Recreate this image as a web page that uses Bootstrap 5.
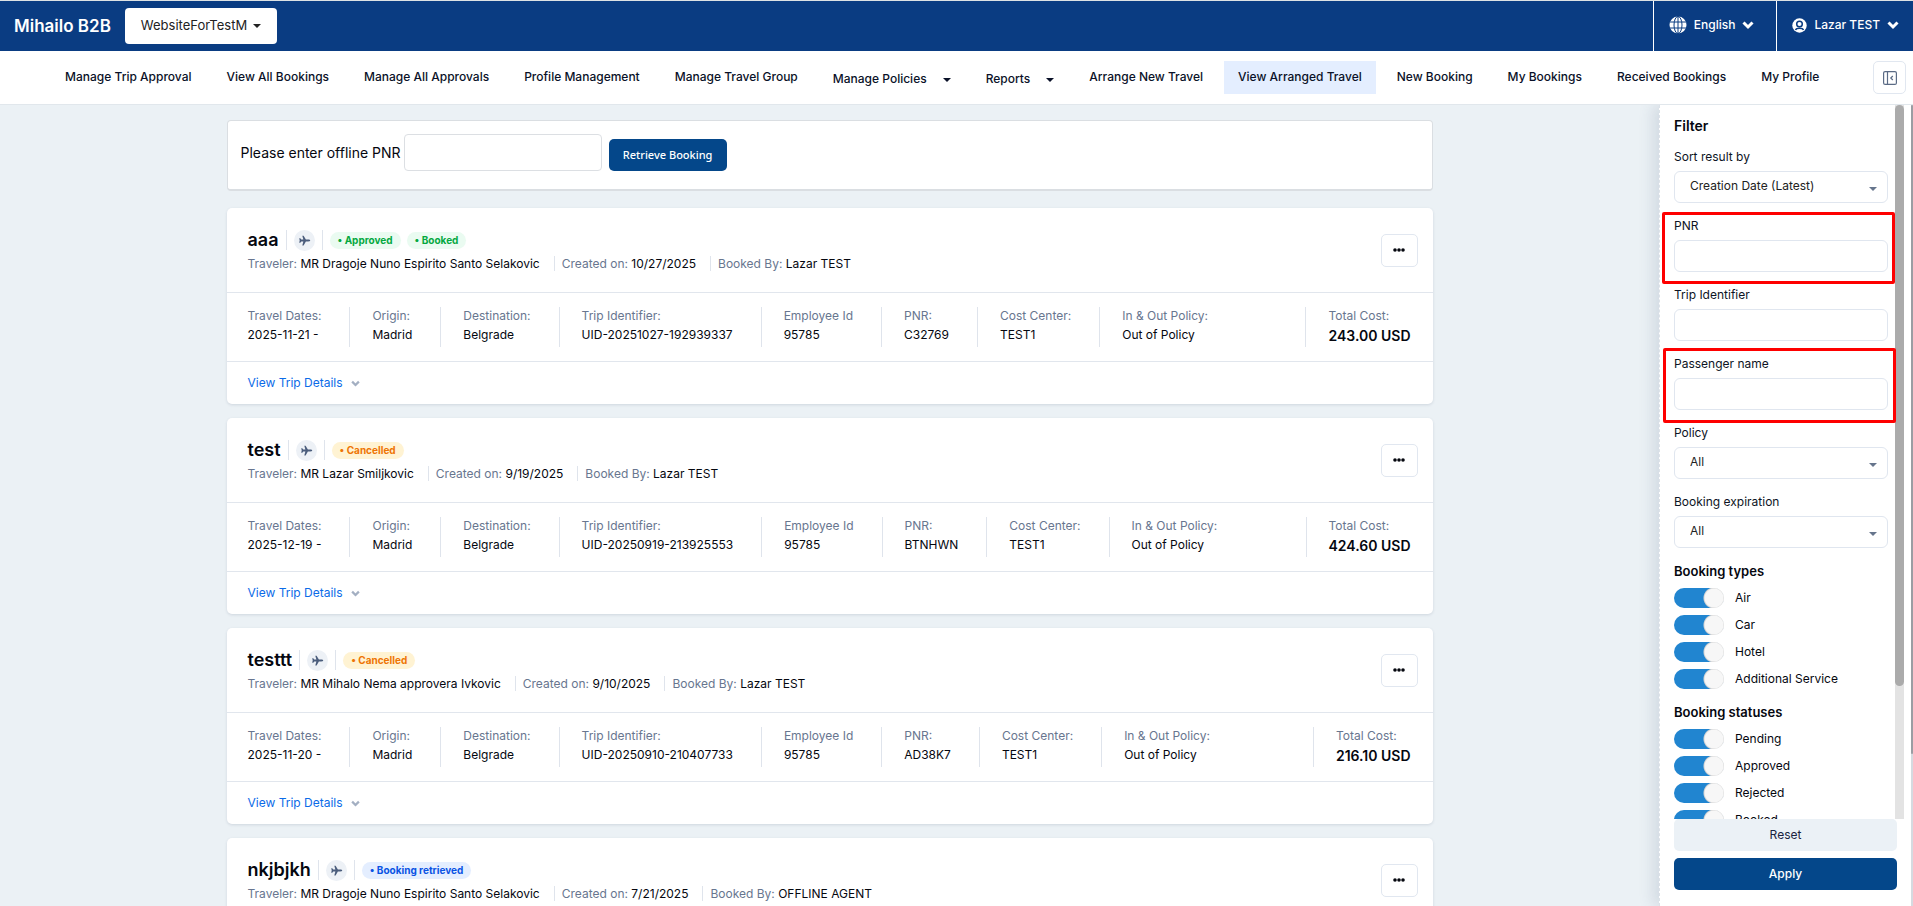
<!DOCTYPE html>
<html lang="en">
<head>
<meta charset="utf-8">
<meta name="viewport" content="width=device-width, initial-scale=1">
<title>Mihailo B2B - View Arranged Travel</title>
<link rel="stylesheet" href="https://cdn.jsdelivr.net/npm/bootstrap@5.3.0/dist/css/bootstrap.min.css">
<style>
  body { font-family: Inter, "Liberation Sans", sans-serif; font-size: 12px; line-height: 18px; color: #05070f; background: #ebf1f5; }
  a { text-decoration: none; }
  .topbar { background: #0a3c82; border-top: 1px solid #dde2e4; height: 51px; flex: none; color: #fff; }
  .brand-name { font-size: 17px; font-weight: 600; margin: 0 14px; }
  .site-btn { height: 36px; width: 152px; background: #fff; border: 0; border-radius: 4px; font-size: 13px; color: #222; padding: 0 0 2px; }
  .tri { width: 0; height: 0; border: 4px solid transparent; border-bottom: 0; border-top-color: currentColor; display: inline-block; }
  .site-btn .tri { margin-left: 2px; vertical-align: 2px; }
  .top-item { border: 0; border-left: 1px solid #fff; background: none; color: #fff; font-weight: 500; height: 50px; padding: 0 14px 2px 15px; }
  .top-item span { margin: 0 7px; }
  .top-item.lang { padding-right: 22px; }
  .menubar { background: #fff; border-bottom: 1px solid #e1e7ec; height: 54px; flex: none; padding: 0 7px 0 51px; }
  .menu-links { gap: 7px; }
  .menubar a { color: #0a1128; font-weight: 500; height: 33px; line-height: 31px; padding: 0 14px; white-space: nowrap; }
  .menubar a.current { background: #e4eeff; }
  .menubar a.dd { line-height: 35px; }
  .menubar .tri { margin-left: 16px; vertical-align: 1px; border-width: 4px 4px 0; }
  .square-btn { background: #fff; border: 1px solid #e1e7f0; border-radius: 5px; color: #05070f; padding: 0; }
  .menubar .square-btn { width: 33px; height: 33px; color: #5b6b85; }
  .results { max-width: 1206px; padding-top: 15px; }
  .search-box { background: #fff; border: 1px solid #dadee2; border-bottom-width: 2px; border-radius: 4px; height: 71px; padding: 0 13px 5px; font-size: 14px; margin-bottom: 17px; }
  .search-box input { width: 198px; height: 37px; border: 1px solid #dcdfe3; border-radius: 4px; margin: 0 7px 0 3px; }
  .blue-btn { background: #04478a; color: #fff; border: 0; border-radius: 5px; font-weight: 500; height: 32px; }
  .retrieve { width: 118px; font: 500 11px "Noto Sans", sans-serif; margin-top: 4px; }
  .trip { background: #fff; border-radius: 5px; box-shadow: 0 1px 3px rgba(40,60,90,.14); margin-bottom: 14px; }
  .trip-head { height: 85px; padding: 21px 15px 0 21px; border-bottom: 1px solid #e1e6ed; }
  .trip-head h2 { font-size: 18px; line-height: 22px; font-weight: 600; margin: 0; }
  .plane { width: 21px; height: 21px; border-radius: 50%; background: #edf1f6; color: #4b5d7c; }
  .bar { width: 1px; background: #dfe4ec; height: 20px; margin: 0 7px; }
  .state { font-size: 10px; line-height: 17px; font-weight: 700; border-radius: 9px; padding: 0 8px; }
  .state + .state { margin-left: 6px; }
  .ok { background: #eafbf1; color: #04a83f; }
  .warn { background: #fff3d3; color: #ee7504; }
  .info { background: #e4eeff; color: #0a53e4; }
  .facts, .sub { color: #68768f; white-space: nowrap; }
  .facts b, .sub b { font-weight: 400; color: #05070f; }
  .sub { margin-top: 4px; }
  .sub span + span { border-left: 1px solid #dfe4ec; padding-left: 7px; margin-left: 14px; }
  .sub span { line-height: 12px; }
  .facts { height: 69px; padding: 14px 22px 0 21px; border-bottom: 1px solid #e1e6ed; }
  .facts div { height: 40px; padding-right: 28px; line-height: 18px; }
  .facts div + div { border-left: 1px solid #dfe4ec; padding-left: 22px; }
  .facts b { display: block; line-height: 20px; }
  .facts .total { margin-left: auto; padding-right: 0; }
  .facts .total b { font-size: 14px; font-weight: 600; line-height: 22px; }
  .more-link { height: 42px; padding: 0 21px; color: #0b6be8; }
  .more-link svg { margin-left: 8px; color: #a3afc2; }
  .more { width: 37px; height: 33px; margin-top: 5px; padding-bottom: 2px; }
  .filter { width: 252px; background: #fff; border-left: 1px dashed #dce2e8; box-shadow: -6px 0 14px rgba(60,80,110,.14); flex: none; }
  .filter h2 { font-size: 14px; line-height: 20px; font-weight: 600; margin: 0 0 12px; }
  .filter h3 { font-size: 13px; line-height: 18px; font-weight: 600; margin: 0 0 8px; }
  .fields { width: 214px; flex: none; padding-top: 11px; margin-left: 14px; }
  .field { position: relative; height: 69px; }
  .field label { display: block; line-height: 18px; color: #0d1424; margin-bottom: 5px; }
  .field input, .field select { display: block; width: 100%; height: 32px; border: 1px solid #e0e6ef; border-radius: 6px; background: #fff; padding: 0 15px 2px; color: #222; appearance: none; }
  .pick { position: relative; }
  .pick .tri { position: absolute; right: 11px; top: 16px; color: #66758c; }
  .boxed::after { content: ""; position: absolute; inset: -5px -7px 2px -12px; border: 3px solid #fe0000; border-radius: 2px; pointer-events: none; }
  .boxed.tall::after { inset: -7px -8px 1px -11px; }
  .switch { height: 20px; margin-bottom: 7px; }
  .switch input { appearance: none; width: 50px; height: 20px; margin: 0 11px 0 0; border-radius: 10px; background: radial-gradient(circle at 40px 10px, #f7f7f7 9px, #d5d5d5 10px, transparent 11px) #2185d0; }
  .switch-group { margin-bottom: 14px; }
  .bar-track { width: 9px; background: #e3e3e3; margin-left: 7px; }
  .bar-thumb { background: #ababab; border-radius: 5px; height: 81.4%; }
  .page-track { width: 2px; background: #d6dae0; flex: none; }
  .page-thumb { background: #9b9da3; border-radius: 2px; height: 81%; }
  .actions { width: 223px; margin-left: 14px; padding-bottom: 16px; flex: none; }
  .reset { background: #ebf1f6; color: #1a2340; border: 0; border-radius: 5px; height: 32px; margin-bottom: 7px; }
</style>
</head>
<body class="vh-100 d-flex flex-column overflow-hidden">
<svg class="d-none" aria-hidden="true">
  <symbol id="plane" viewBox="0 0 16 16"><path fill="currentColor" d="M15 8c0 .7-1.200 1.100-2.200 1.100H9.700L6.900 14H5.300l1.300-4.900H4L2.800 10.800H1.500L2.100 8l-.6-2.800h1.300L4 6.900h2.600L5.300 2h1.600l2.800 4.900h3.100C13.800 6.900 15 7.300 15 8z"/></symbol>
  <symbol id="chev" viewBox="0 0 12 12"><path fill="none" stroke="currentColor" stroke-width="3" d="M1.500 3.500 6 8l4.500-4.500"/></symbol>
  <symbol id="dots" viewBox="0 0 12 4"><g fill="currentColor"><circle cx="2" cy="2" r="1.800"/><circle cx="6" cy="2" r="1.800"/><circle cx="10" cy="2" r="1.800"/></g></symbol>
</svg>

<header class="topbar d-flex align-items-center">
  <div class="brand-name text-nowrap">Mihailo B2B</div>
  <button class="site-btn" type="button">WebsiteForTestM <span class="tri"></span></button>
  <div class="ms-auto d-flex">
    <button class="top-item d-flex align-items-center lang" type="button">
      <svg width="18" height="18" viewBox="0 0 18 18"><circle cx="9" cy="9" r="8.500" fill="#fff"/><g fill="none" stroke="#0a3c82"><ellipse cx="9" cy="9" rx="4" ry="8.500"/><path d="M9 0v18M1 6h16M1 12h16"/></g></svg>
      <span>English</span>
      <svg width="12" height="12"><use href="#chev"/></svg>
    </button>
    <button class="top-item d-flex align-items-center" type="button">
      <svg width="15" height="15" viewBox="0 0 15 15"><circle cx="7.500" cy="7.500" r="7.200" fill="#fff"/><circle cx="7.500" cy="6" r="2.800" fill="none" stroke="#0a3c82" stroke-width="1.500"/><path d="M3.500 12c1-2.300 7-2.300 8 0" fill="none" stroke="#0a3c82" stroke-width="1.500"/></svg>
      <span>Lazar TEST</span>
      <svg width="12" height="12"><use href="#chev"/></svg>
    </button>
  </div>
</header>

<nav class="menubar d-flex align-items-center">
  <div class="d-flex menu-links">
    <a href="#">Manage Trip Approval</a>
    <a href="#">View All Bookings</a>
    <a href="#">Manage All Approvals</a>
    <a href="#">Profile Management</a>
    <a href="#">Manage Travel Group</a>
    <a href="#" class="dd">Manage Policies<span class="tri"></span></a>
    <a href="#" class="dd">Reports<span class="tri"></span></a>
    <a href="#">Arrange New Travel</a>
    <a href="#" class="current">View Arranged Travel</a>
    <a href="#">New Booking</a>
    <a href="#">My Bookings</a>
    <a href="#">Received Bookings</a>
    <a href="#">My Profile</a>
  </div>
  <button class="square-btn ms-auto" type="button" aria-label="Toggle filter">
    <svg width="14" height="14" viewBox="0 0 14 14" fill="none" stroke="currentColor" stroke-width="1.200"><rect x=".6" y=".6" width="12.800" height="12.800" rx="1.500"/><path d="M4.500.6v12.800M9.800 5 7.800 7l2 2"/></svg>
  </button>
</nav>

<div class="d-flex flex-fill overflow-hidden">
  <main class="flex-fill overflow-hidden">
    <div class="results mx-auto">
      <form class="search-box d-flex align-items-center">
        <label for="offline">Please enter offline PNR</label>
        <input id="offline" type="text">
        <button class="blue-btn retrieve" type="button">Retrieve Booking</button>
      </form>

      <article class="trip">
        <div class="trip-head d-flex justify-content-between">
          <div>
            <div class="d-flex align-items-center">
              <h2>aaa</h2><span class="bar"></span>
              <span class="plane d-flex align-items-center justify-content-center"><svg width="13" height="13"><use href="#plane"/></svg></span><span class="bar"></span>
              <span class="state ok">• Approved</span><span class="state ok">• Booked</span>
            </div>
            <div class="sub"><span>Traveler: <b>MR Dragoje Nuno Espirito Santo Selakovic</b></span><span>Created on: <b>10/27/2025</b></span><span>Booked By: <b>Lazar TEST</b></span></div>
          </div>
          <button class="square-btn more" type="button" aria-label="More"><svg class="d-block mx-auto" width="12" height="4"><use href="#dots"/></svg></button>
        </div>
        <div class="facts d-flex">
          <div>Travel Dates:<b>2025-11-21 -</b></div><div>Origin:<b>Madrid</b></div><div>Destination:<b>Belgrade</b></div><div>Trip Identifier:<b>UID-20251027-192939337</b></div><div>Employee Id<b>95785</b></div><div>PNR:<b>C32769</b></div><div>Cost Center:<b>TEST1</b></div><div>In &amp; Out Policy:<b>Out of Policy</b></div><div class="total">Total Cost:<b>243.00 USD</b></div>
        </div>
        <a href="#" class="more-link d-flex align-items-center">View Trip Details<svg width="9" height="9"><use href="#chev"/></svg></a>
      </article>

      <article class="trip">
        <div class="trip-head d-flex justify-content-between">
          <div>
            <div class="d-flex align-items-center">
              <h2>test</h2><span class="bar"></span>
              <span class="plane d-flex align-items-center justify-content-center"><svg width="13" height="13"><use href="#plane"/></svg></span><span class="bar"></span>
              <span class="state warn">• Cancelled</span>
            </div>
            <div class="sub"><span>Traveler: <b>MR Lazar Smiljkovic</b></span><span>Created on: <b>9/19/2025</b></span><span>Booked By: <b>Lazar TEST</b></span></div>
          </div>
          <button class="square-btn more" type="button" aria-label="More"><svg class="d-block mx-auto" width="12" height="4"><use href="#dots"/></svg></button>
        </div>
        <div class="facts d-flex">
          <div>Travel Dates:<b>2025-12-19 -</b></div><div>Origin:<b>Madrid</b></div><div>Destination:<b>Belgrade</b></div><div>Trip Identifier:<b>UID-20250919-213925553</b></div><div>Employee Id<b>95785</b></div><div>PNR:<b>BTNHWN</b></div><div>Cost Center:<b>TEST1</b></div><div>In &amp; Out Policy:<b>Out of Policy</b></div><div class="total">Total Cost:<b>424.60 USD</b></div>
        </div>
        <a href="#" class="more-link d-flex align-items-center">View Trip Details<svg width="9" height="9"><use href="#chev"/></svg></a>
      </article>

      <article class="trip">
        <div class="trip-head d-flex justify-content-between">
          <div>
            <div class="d-flex align-items-center">
              <h2>testtt</h2><span class="bar"></span>
              <span class="plane d-flex align-items-center justify-content-center"><svg width="13" height="13"><use href="#plane"/></svg></span><span class="bar"></span>
              <span class="state warn">• Cancelled</span>
            </div>
            <div class="sub"><span>Traveler: <b>MR Mihalo Nema approvera Ivkovic</b></span><span>Created on: <b>9/10/2025</b></span><span>Booked By: <b>Lazar TEST</b></span></div>
          </div>
          <button class="square-btn more" type="button" aria-label="More"><svg class="d-block mx-auto" width="12" height="4"><use href="#dots"/></svg></button>
        </div>
        <div class="facts d-flex">
          <div>Travel Dates:<b>2025-11-20 -</b></div><div>Origin:<b>Madrid</b></div><div>Destination:<b>Belgrade</b></div><div>Trip Identifier:<b>UID-20250910-210407733</b></div><div>Employee Id<b>95785</b></div><div>PNR:<b>AD38K7</b></div><div>Cost Center:<b>TEST1</b></div><div>In &amp; Out Policy:<b>Out of Policy</b></div><div class="total">Total Cost:<b>216.10 USD</b></div>
        </div>
        <a href="#" class="more-link d-flex align-items-center">View Trip Details<svg width="9" height="9"><use href="#chev"/></svg></a>
      </article>

      <article class="trip">
        <div class="trip-head d-flex justify-content-between">
          <div>
            <div class="d-flex align-items-center">
              <h2>nkjbjkh</h2><span class="bar"></span>
              <span class="plane d-flex align-items-center justify-content-center"><svg width="13" height="13"><use href="#plane"/></svg></span><span class="bar"></span>
              <span class="state info">• Booking retrieved</span>
            </div>
            <div class="sub"><span>Traveler: <b>MR Dragoje Nuno Espirito Santo Selakovic</b></span><span>Created on: <b>7/21/2025</b></span><span>Booked By: <b>OFFLINE AGENT</b></span></div>
          </div>
          <button class="square-btn more" type="button" aria-label="More"><svg class="d-block mx-auto" width="12" height="4"><use href="#dots"/></svg></button>
        </div>
      </article>
    </div>
  </main>

  <aside class="filter d-flex flex-column">
    <div class="d-flex flex-fill overflow-hidden">
      <div class="fields">
        <h2>Filter</h2>
        <div class="field"><label for="sort">Sort result by</label><div class="pick"><select id="sort"><option>Creation Date (Latest)</option></select><span class="tri"></span></div></div>
        <div class="field boxed"><label for="pnr">PNR</label><input id="pnr" type="text"></div>
        <div class="field"><label for="trip">Trip Identifier</label><input id="trip" type="text"></div>
        <div class="field boxed tall"><label for="pax">Passenger name</label><input id="pax" type="text"></div>
        <div class="field"><label for="policy">Policy</label><div class="pick"><select id="policy"><option>All</option></select><span class="tri"></span></div></div>
        <div class="field"><label for="exp">Booking expiration</label><div class="pick"><select id="exp"><option>All</option></select><span class="tri"></span></div></div>
        <div class="switch-group">
          <h3>Booking types</h3>
          <div class="switch d-flex align-items-center"><input type="checkbox" id="s1" checked><label for="s1">Air</label></div>
          <div class="switch d-flex align-items-center"><input type="checkbox" id="s2" checked><label for="s2">Car</label></div>
          <div class="switch d-flex align-items-center"><input type="checkbox" id="s3" checked><label for="s3">Hotel</label></div>
          <div class="switch d-flex align-items-center"><input type="checkbox" id="s4" checked><label for="s4">Additional Service</label></div>
        </div>
        <div class="switch-group">
          <h3>Booking statuses</h3>
          <div class="switch d-flex align-items-center"><input type="checkbox" id="s5" checked><label for="s5">Pending</label></div>
          <div class="switch d-flex align-items-center"><input type="checkbox" id="s6" checked><label for="s6">Approved</label></div>
          <div class="switch d-flex align-items-center"><input type="checkbox" id="s7" checked><label for="s7">Rejected</label></div>
          <div class="switch d-flex align-items-center"><input type="checkbox" id="s8" checked><label for="s8">Booked</label></div>
        </div>
      </div>
      <div class="bar-track"><div class="bar-thumb"></div></div>
    </div>
    <div class="actions d-flex flex-column">
      <button class="reset" type="button">Reset</button>
      <button class="blue-btn" type="button">Apply</button>
    </div>
  </aside>
  <div class="page-track"><div class="page-thumb"></div></div>
</div>
<script src="https://cdn.jsdelivr.net/npm/bootstrap@5.3.0/dist/js/bootstrap.bundle.min.js"></script>
</body>
</html>
